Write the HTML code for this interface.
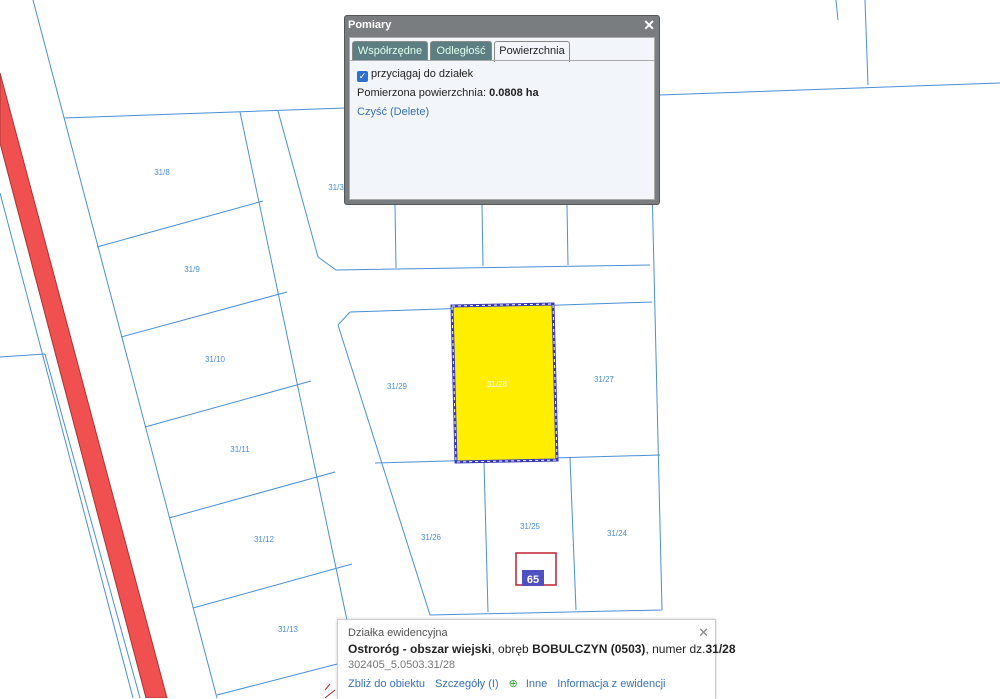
<!DOCTYPE html><html><head><meta charset="utf-8"><style>
body{margin:0;width:1000px;height:698px;overflow:hidden;background:#fff;font-family:"Liberation Sans",sans-serif;position:relative}
svg{position:absolute;left:0;top:0}
#dlg{position:absolute;left:344px;top:15px;width:316px;height:190px;background:#7a7d80;border:1px solid #555;border-radius:3px;box-sizing:border-box}
#dlg .t{color:#fff;font-weight:bold;font-size:11px;padding:3px 3px}
#dlg .x{position:absolute;right:4px;top:1px;color:#fff;font-weight:bold;font-size:14px}
#dlg .b{position:absolute;left:4px;top:21px;right:4px;bottom:4px;background:#f2f6fb;border:1px solid #aaa}
.tab{position:absolute;top:3px;height:19px;font-size:11px;line-height:19px;text-align:center;border:1px solid #888;border-bottom:none;border-radius:3px 3px 0 0;background:#5e7f82;color:#dfe;}
.c{font-size:11px;color:#222;position:absolute;left:7px}
#pop{position:absolute;left:337px;top:619px;width:377px;height:79px;background:#fff;border:1px solid #ccc;border-bottom:none;font-size:11px;box-shadow:0 0 3px rgba(0,0,0,.2)}
#pop a{color:#3a72b8;text-decoration:none;margin-right:10px}
</style></head><body>
<svg width="1000" height="698" viewBox="0 0 1000 698">
<g stroke="#4a8fd8" stroke-width="1" fill="none">
<path d="M33 0L217 698M0 193L133 698M45 354L140 698M0 357L45 354"/>
<path d="M64 118L345 108M660 95L1000 83M865 0L868 85M836 0L838 20"/>
<path d="M240 112L348 625M278 111L318 257L336 270L650 265"/>
<path d="M97 247L263 201M121 337L287 292M145 427L311 381M169 518L335 472M193 608L352 564M217 695L345 662"/>
<path d="M350 312L652 302M350 312L338 325L430 615L662 610M650 100L662 610M375 463L660 455M484 462L488 612M570 458L576 610"/>
<path d="M395 205L396 268M482 205L483 266M567 205L568 265"/>
</g>
<path d="M0 73L167 698L146 698L0 143Z" fill="#f05050" stroke="#a33" stroke-width="1"/>
<path d="M452 306L553 304L557 460L456 462Z" fill="#ffee00" stroke="#3838b8" stroke-width="3"/>
<path d="M452 306L553 304L557 460L456 462Z" fill="none" stroke="#fff" stroke-width="1" stroke-dasharray="3 3"/>
<text x="497" y="387" font-size="8" fill="#fff" text-anchor="middle">31/28</text>
<g font-size="8" fill="#4a8fd8" text-anchor="middle"><text x="162" y="175">31/8</text><text x="192" y="272">31/9</text><text x="215" y="362">31/10</text><text x="240" y="452">31/11</text><text x="264" y="542">31/12</text><text x="288" y="632">31/13</text><text x="336" y="190">31/3</text><text x="397" y="389">31/29</text><text x="604" y="382">31/27</text><text x="431" y="540">31/26</text><text x="530" y="529">31/25</text><text x="617" y="536">31/24</text></g>
<rect x="516" y="553" width="40" height="32" fill="none" stroke="#c02030" stroke-width="1.5"/>
<rect x="522" y="570" width="22" height="16" fill="#5050c0"/>
<text x="533" y="583" font-size="11" font-weight="bold" fill="#fff" text-anchor="middle">65</text>
<path d="M325 690L330 684M325 698L335 690" stroke="#c02030"/>
</svg>
<div id="dlg"><div class="t">Pomiary</div><div class="x">✕</div>
<div class="b">
<div class="tab" style="left:2px;width:74px">Współrzędne</div>
<div class="tab" style="left:80px;width:60px">Odległość</div>
<div class="tab" style="left:144px;width:74px;background:#f2f6fb;color:#222;height:20px">Powierzchnia</div>
<div style="position:absolute;left:0;right:0;top:22px;border-top:1px solid #aaa"></div>
<div class="c" style="top:30px"><span style="display:inline-block;width:11px;height:11px;background:#2f6fd0;border-radius:2px;vertical-align:-2px;color:#fff;font-size:9px;text-align:center;line-height:11px">✓</span> przyciągaj do działek</div>
<div class="c" style="top:49px">Pomierzona powierzchnia: <b>0.0808 ha</b></div>
<div class="c" style="top:68px;color:#3a72b8">Czyść (Delete)</div>
</div></div>
<div id="pop">
<div style="position:absolute;left:10px;top:7px;color:#555">Działka ewidencyjna</div>
<div style="position:absolute;right:6px;top:5px;color:#888;font-size:13px">✕</div>
<div style="position:absolute;left:10px;top:22px;font-size:12px;color:#222;white-space:nowrap"><b>Ostroróg - obszar wiejski</b>, obręb <b>BOBULCZYN (0503)</b>, numer dz.<b>31/28</b></div>
<div style="position:absolute;left:10px;top:39px;color:#777">302405_5.0503.31/28</div>
<div style="position:absolute;left:10px;top:57px;white-space:nowrap"><a>Zbliż do obiektu</a><a>Szczegóły (I)</a><span style="color:#3a3;margin-right:8px">⊕</span><a>Inne</a><a>Informacja z ewidencji</a></div>
</div>
</body></html>
